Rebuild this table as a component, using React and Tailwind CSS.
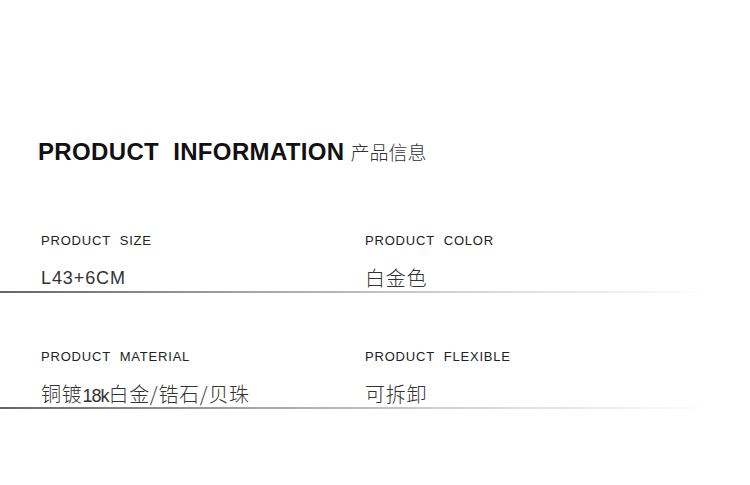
import React from 'react';

const rows = [
  [
    { label: 'PRODUCT\u00a0\u00a0SIZE', value: 'L43+6CM', latin: true },
    { label: 'PRODUCT\u00a0\u00a0COLOR', value: '白金色' },
  ],
  [
    {
      label: 'PRODUCT\u00a0\u00a0MATERIAL',
      value: (
        <>
          铜镀<span className="font-['Liberation_Sans_Narrow','Liberation_Sans',sans-serif] font-normal text-[18px] tracking-[-1px]">18k</span>白金/锆石/贝珠
        </>
      ),
    },
    { label: 'PRODUCT\u00a0\u00a0FLEXIBLE', value: '可拆卸' },
  ],
];

const Cell = ({ label, value, latin }) => (
  <div>
    <p className="text-[13px] leading-[13px] tracking-[0.8px] text-[#222]">{label}</p>
    <p
      className={
        latin
          ? 'mt-[21px] h-[20px] text-[18px] leading-[20px] tracking-[0.9px] text-[#333]'
          : "mt-[21px] h-[20px] text-[20px] leading-[20px] tracking-[0.7px] font-light text-[#333] font-['Noto_Sans_CJK_SC',sans-serif]"
      }
    >
      {value}
    </p>
  </div>
);

export default function App() {
  return (
    <div className="w-[750px] h-[485px] bg-white pt-[140px] font-['Liberation_Sans','Noto_Sans_CJK_SC',sans-serif]">
      <h1 className="flex items-baseline pl-[38px]">
        <span className="text-[24px] leading-[24px] font-bold tracking-[0.35px] text-[#111]">
          PRODUCT&nbsp;&nbsp;INFORMATION
        </span>
        <span className="ml-[6px] text-[19px] leading-[24px] font-light text-[#333] font-['Noto_Sans_CJK_SC',sans-serif]">
          产品信息
        </span>
      </h1>

      <div className="mt-[70px] space-y-[57px]">
        {rows.map((row, i) => (
          <div key={i}>
            <div className="grid grid-cols-[324px_1fr] pl-[41px]">
              {row.map((c) => (
                <Cell key={c.label} {...c} />
              ))}
            </div>
            <div className="mt-[3px] h-[2px] w-full bg-[linear-gradient(to_right,#666,#a6a6a6_34%,#dcdcdc_67%,#fff_95%)]" />
          </div>
        ))}
      </div>
    </div>
  );
}
